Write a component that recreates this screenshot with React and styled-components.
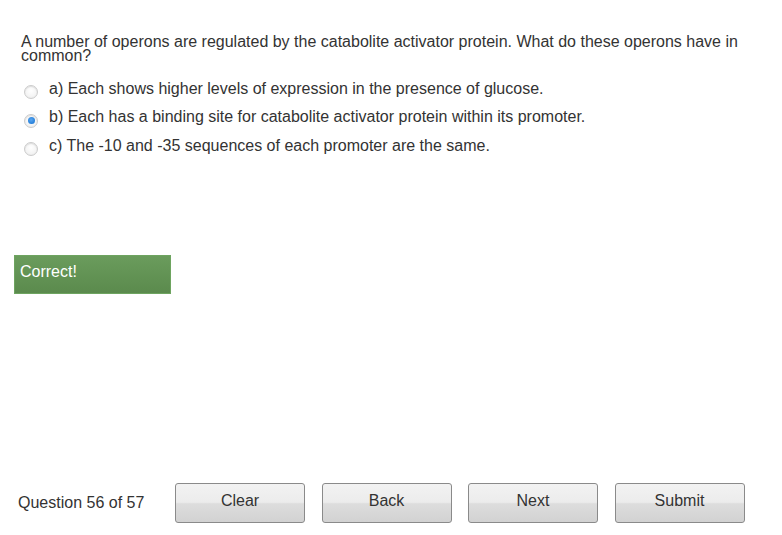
import React from "react";
import styled, { createGlobalStyle } from "styled-components";

const Global = createGlobalStyle`
  html, body { margin: 0; padding: 0; background: #fff; }
  body { font-family: "Liberation Sans", Arial, sans-serif; color: #333; }
`;

const Page = styled.div`
  width: 782px;
  height: 535px;
  display: flex;
  flex-direction: column;
  box-sizing: border-box;
  padding: 35px 0 0 0;
`;

const Question = styled.div`
  margin: 0 0 0 21px;
  width: 730px;
  font-size: 16px;
  line-height: 14px;
  color: #333;
`;

const Options = styled.div`
  display: flex;
  flex-direction: column;
  margin: 16px 0 0 24px;
  gap: 8.5px;
`;

const Option = styled.label`
  display: flex;
  align-items: center;
  gap: 11px;
  font-size: 16px;
  line-height: 18.5px;
  color: #333;
`;

const Radio = styled.span`
  width: 12px;
  height: 12px;
  border-radius: 50%;
  border: 1px solid #cccccc;
  background: radial-gradient(circle at 50% 40%, #ffffff 0%, #f4f4f4 60%, #e2e2e2 100%);
  box-shadow: inset 0 1px 1px rgba(0,0,0,0.1);
  display: flex;
  align-items: center;
  justify-content: center;
  margin-top: ${p => p.$offset || 0}px;
  &::after {
    content: "";
    width: 7px;
    height: 7px;
    border-radius: 50%;
    background: ${p => (p.$checked ? "radial-gradient(circle at 45% 40%, #5aa6f0 0%, #1f7ad6 80%)" : "transparent")};
  }
`;

const Feedback = styled.div`
  margin: 99px 0 0 14px;
  width: 157px;
  height: 39px;
  box-sizing: border-box;
  padding: 7px 0 0 5px;
  background: linear-gradient(#6a9c5c, #5b8a4d);
  border: 1px solid #6ea460;
  color: #fff;
  font-size: 16px;
  line-height: 18px;
`;

const Footer = styled.div`
  margin-top: auto;
  margin-bottom: 12px;
  display: flex;
  align-items: center;
  padding-left: 18px;
`;

const Counter = styled.div`
  width: 157px;
  font-size: 16px;
  color: #333;
`;

const Buttons = styled.div`
  display: flex;
  gap: 16.5px;
`;

const Button = styled.button`
  width: 130px;
  height: 40px;
  box-sizing: border-box;
  border: 1px solid #8a8a8a;
  border-radius: 3px;
  background: linear-gradient(#f2f2f2 0%, #ececec 48%, #dddddd 52%, #d2d2d2 100%);
  font-family: "Liberation Sans", Arial, sans-serif;
  font-size: 16px;
  color: #333;
  padding: 0 0 4px 0;
  cursor: pointer;
`;

export default function App() {
  return (
    <Page>
      <Global />
      <Question>
        A number of operons are regulated by the catabolite activator protein. What do these operons have in common?
      </Question>
      <Options>
        <Option><Radio $offset={6} />a) Each shows higher levels of expression in the presence of glucose.</Option>
        <Option><Radio $checked $offset={6} />b) Each has a binding site for catabolite activator protein within its promoter.</Option>
        <Option><Radio $offset={6} />c) The -10 and -35 sequences of each promoter are the same.</Option>
      </Options>
      <Feedback>Correct!</Feedback>
      <Footer>
        <Counter>Question 56 of 57</Counter>
        <Buttons>
          <Button>Clear</Button>
          <Button>Back</Button>
          <Button>Next</Button>
          <Button>Submit</Button>
        </Buttons>
      </Footer>
    </Page>
  );
}
